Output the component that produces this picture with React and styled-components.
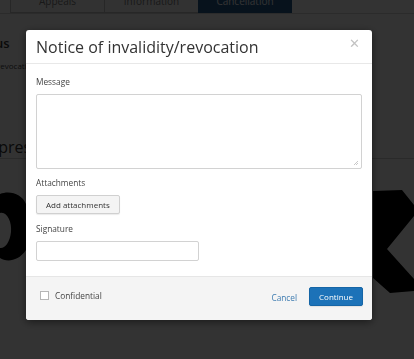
import React from "react"
import styled, { createGlobalStyle } from "styled-components"

const GlobalStyle = createGlobalStyle`
  html, body {
    margin: 0;
    padding: 0;
    background: #ffffff;
    font-family: "Open Sans", "Liberation Sans", sans-serif;
    overflow: hidden;
  }
`

const Page = styled.div`
  width: 414px;
  height: 359px;
  overflow: hidden;
`

const TabRow = styled.div`
  display: flex;
  margin-top: -17px;
  padding-left: 10px;
  border-bottom: 1px solid #d8d8d8;
`

const Tab = styled.div`
  width: 94px;
  height: 30px;
  box-sizing: border-box;
  padding-top: 6px;
  display: flex;
  align-items: center;
  justify-content: center;
  font-size: 10px;
  color: ${p => (p.active ? "#ffffff" : "#7a7a7a")};
  background: ${p => (p.active ? "#245a8d" : "#fafafa")};
  border: 1px solid ${p => (p.active ? "#245a8d" : "#c4c4c4")};
  border-right: none;
  &:last-child {
    border-right: 1px solid #245a8d;
  }
`

const Content = styled.div`
  display: flex;
  flex-direction: column;
`

const Heading = styled.div`
  margin-top: ${p => p.top}px;
  margin-left: ${p => p.shift}px;
  font-size: ${p => p.size}px;
  font-weight: ${p => p.weight || 400};
  color: #333;
  line-height: 18px;
  white-space: nowrap;
`

const SmallLine = styled.div`
  margin-top: 8px;
  margin-left: -3px;
  font-size: 8px;
  color: #444;
  white-space: nowrap;
`

const Rule = styled.div`
  margin-top: 2px;
  border-bottom: 1px solid #cfcfcf;
`

const Scribble = styled.svg`
  display: block;
  margin-top: 26px;
`

const Overlay = styled.div`
  position: fixed;
  inset: 0;
  background: rgba(0, 0, 0, 0.8);
  padding: 30px 0 0 26px;
`

const Modal = styled.div`
  width: 346px;
  background: #fff;
  border-radius: 3px;
  box-shadow: 0 2px 8px rgba(0, 0, 0, 0.5);
  overflow: hidden;
`

const Header = styled.div`
  height: 34px;
  box-sizing: border-box;
  display: flex;
  align-items: center;
  justify-content: space-between;
  padding: 0 10px 0 10px;
  border-bottom: 1px solid #e8e8e8;
`

const Title = styled.h2`
  margin: 0;
  padding-top: 1px;
  font-size: 16px;
  font-weight: 400;
  color: #333;
`

const Close = styled.span`
  font-size: 13px;
  color: #c2c2c2;
  margin-top: -8px;
  margin-right: 2px;
`

const Body = styled.div`
  padding: 12px 10px 15px;
  display: flex;
  flex-direction: column;
  align-items: flex-start;
`

const Label = styled.label`
  font-size: 8.3px;
  line-height: 12px;
  color: #444;
  margin-top: ${p => p.gap || 0}px;
  margin-bottom: 6px;
`

const TextArea = styled.div`
  position: relative;
  width: 326px;
  height: 75px;
  box-sizing: border-box;
  border: 1px solid #d2d2d2;
  border-radius: 2px;
`

const Grip = styled.svg`
  position: absolute;
  right: 2px;
  bottom: 2px;
`

const Input = styled.div`
  width: 163px;
  height: 20px;
  box-sizing: border-box;
  border: 1px solid #d2d2d2;
  border-radius: 2px;
`

const Button = styled.button`
  height: 19px;
  box-sizing: border-box;
  padding: 0 9px;
  font-family: inherit;
  font-size: 8px;
  color: ${p => (p.primary ? "#fff" : "#333")};
  background: ${p => (p.primary ? "#1c72b8" : "#f4f4f4")};
  border: 1px solid ${p => (p.primary ? "#1565a6" : "#d0d0d0")};
  border-radius: 2px;
  box-shadow: 0 1px 1px rgba(0, 0, 0, 0.08);
`

const Footer = styled.div`
  height: 44px;
  box-sizing: border-box;
  background: #f4f4f4;
  border-top: 1px solid #e6e6e6;
  display: flex;
  align-items: center;
  padding: 0 9px 5px 14px;
`

const Check = styled.label`
  display: flex;
  align-items: center;
  gap: 6px;
  font-size: 8.3px;
  color: #444;
  margin-top: -2px;
`

const Box = styled.span`
  width: 9px;
  height: 9px;
  box-sizing: border-box;
  border: 1px solid #b5b5b5;
  background: #fff;
`

const Actions = styled.div`
  margin-left: auto;
  display: flex;
  align-items: center;
  gap: 12px;
`

const LinkButton = styled.span`
  font-size: 8.3px;
  color: #3d7bb0;
  margin-top: 2px;
`

export default function App() {
  return (
    <>
      <GlobalStyle />
      <Page>
        <TabRow>
          <Tab>Appeals</Tab>
          <Tab>Information</Tab>
          <Tab active>Cancellation</Tab>
        </TabRow>
        <Content>
          <Heading top={20} shift={-30} size={13} weight={600}>Status</Heading>
          <SmallLine>revocation proceedings</SmallLine>
          <Heading top={67} shift={-21} size={16}>Impressum</Heading>
          <Rule />
          <Scribble width="414" height="110" viewBox="0 185 414 110">
            <path
              fillRule="evenodd"
              d="M0 194 C10 190 22 194 26 204 L26 250 C18 262 6 262 0 258 Z M0 213 C7 211 12 222 11 232 C10 243 4 249 0 248 Z"
              fill="#000"
            />
            <polygon
              points="373,191 402,190 414,205 414,216 387,249 414,279 414,291 390,293 373,278"
              fill="#000"
            />
          </Scribble>
        </Content>
      </Page>
      <Overlay>
        <Modal>
          <Header>
            <Title>Notice of invalidity/revocation</Title>
            <Close>✕</Close>
          </Header>
          <Body>
            <Label>Message</Label>
            <TextArea>
              <Grip width="6" height="6" viewBox="0 0 6 6">
                <path d="M5 1 L1 5 M5 3 L3 5" stroke="#bbb" strokeWidth="0.8" />
              </Grip>
            </TextArea>
            <Label gap={8}>Attachments</Label>
            <Button>Add attachments</Button>
            <Label gap={9}>Signature</Label>
            <Input />
          </Body>
          <Footer>
            <Check>
              <Box />
              Confidential
            </Check>
            <Actions>
              <LinkButton>Cancel</LinkButton>
              <Button primary>Continue</Button>
            </Actions>
          </Footer>
        </Modal>
      </Overlay>
    </>
  )
}
